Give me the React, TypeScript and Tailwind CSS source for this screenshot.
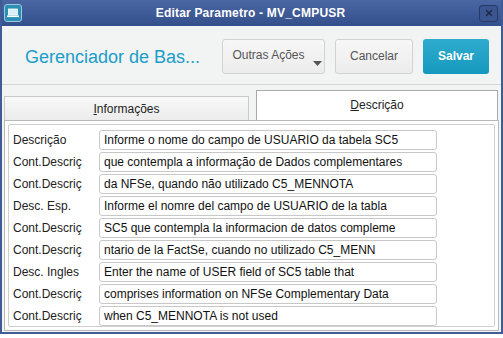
import { X } from "lucide-react";

const rows = [
  { label: "Descrição", value: "Informe o nome do campo de USUARIO da tabela SC5" },
  { label: "Cont.Descriç", value: "que contempla a informação de Dados complementares" },
  { label: "Cont.Descriç", value: "da NFSe, quando não utilizado C5_MENNOTA" },
  { label: "Desc. Esp.", value: "Informe el nomre del campo de USUARIO de la tabla" },
  { label: "Cont.Descriç", value: "SC5 que contempla la informacion de datos compleme" },
  { label: "Cont.Descriç", value: "ntario de la FactSe, cuando no utilizado C5_MENN" },
  { label: "Desc. Ingles", value: "Enter the name of USER field of SC5 table that" },
  { label: "Cont.Descriç", value: "comprises information on NFSe Complementary Data" },
  { label: "Cont.Descriç", value: "when C5_MENNOTA is not used" },
];

export default function App() {
  return (
    <div className="w-[503px] h-[338px] overflow-hidden bg-white font-['Liberation_Sans',Arial,sans-serif]">
      {/* Window */}
      <div className="h-[334px] flex flex-col bg-[#3f5c98] px-[2px] pb-[2px]">
        {/* Title bar */}
        <div className="h-[26px] flex items-center px-[2px] bg-gradient-to-b from-[#4a66a3] to-[#34508c]">
          <div className="w-[18px] h-[18px] rounded-[3px] border border-[#9fc6dc] bg-[#2a8fb5] flex items-center justify-center">
            <svg width="12" height="10" viewBox="0 0 12 10">
              <rect x="1.5" y="1" width="9" height="6" fill="#d9f0fa" stroke="#ffffff" strokeWidth="0.8" />
              <rect x="0" y="7.5" width="12" height="1.6" fill="#ffffff" />
            </svg>
          </div>
          <div className="flex-1 text-center text-white font-bold text-[12px] tracking-[0.2px]">
            Editar Parametro - MV_CMPUSR
          </div>
          <div className="w-[19px] h-[17px] rounded-[3px] border border-[#26396a] bg-[#3a5590] flex items-center justify-center mr-[1px]">
            <X size={10} strokeWidth={3.5} color="#1f2a44" />
          </div>
        </div>

        {/* Body */}
        <div className="flex-1 flex flex-col bg-[#f2f3f3]">
          {/* Header */}
          <div className="h-[59px] flex items-center border-b border-[#d6d6d6] pr-[12px]">
            <div className="flex-1 pl-[23px] text-[18px] text-[#1b9dc9] pt-[4px]">Gerenciador de Bas...</div>
            <div className="flex gap-[10px] items-center pt-[2px]">
              <div className="relative w-[103px] h-[35px] rounded-[3px] border border-[#d2d2d2] bg-gradient-to-b from-[#f7f7f7] to-[#ececec] flex items-center justify-center pb-[2px] pr-[10px] text-[12px] text-[#555]">
                Outras Ações
                <svg className="absolute right-[2px] bottom-[7px]" width="9" height="5" viewBox="0 0 9 5">
                  <path d="M0 0 H9 L4.5 5 Z" fill="#555" />
                </svg>
              </div>
              <div className="w-[78px] h-[35px] rounded-[3px] border border-[#d2d2d2] bg-gradient-to-b from-[#f7f7f7] to-[#ececec] flex items-center justify-center text-[12px] text-[#555]">
                Cancelar
              </div>
              <div className="w-[66px] h-[35px] rounded-[3px] bg-gradient-to-b from-[#2eaccf] to-[#1598bd] flex items-center justify-center text-[12px] font-bold text-white">
                Salvar
              </div>
            </div>
          </div>

          {/* Tabs */}
          <div className="flex items-end px-[2px] pt-[5px] h-[35px]">
            <div className="w-[245px] h-[24px] border border-b-0 border-[#c9c9c9] bg-gradient-to-b from-[#f8f8f8] to-[#ececec] flex items-center justify-center text-[12px] text-[#222]">
              <span><span className="underline">I</span>nformações</span>
            </div>
            <div className="w-[7px]" />
            <div className="w-[242px] h-[30px] border border-b-0 border-[#a9a9a9] bg-white flex items-center justify-center text-[12px] text-[#222] pb-[2px]">
              <span><span className="underline">D</span>escrição</span>
            </div>
          </div>

          {/* Panel */}
          <div className="flex-1 mx-[2px] mb-[1px] border border-[#b9b9b9] bg-white p-[3px]">
            <div className="h-full border border-[#cfcfcf] rounded-[2px] flex flex-col gap-[2px] pt-[5px] pl-[3px]">
              {rows.map((r, i) => (
                <div key={i} className="flex items-center h-[20px]">
                  <div className="w-[87px] text-[12px] text-[#222] pl-[1px]">{r.label}</div>
                  <div className="w-[338px] h-[20px] border border-[#c8c8c8] rounded-[3px] bg-white flex items-center px-[4px] text-[12px] text-[#111] whitespace-nowrap overflow-hidden">
                    {r.value}
                  </div>
                </div>
              ))}
            </div>
          </div>
        </div>
      </div>
      <div className="h-[4px] bg-white" />
    </div>
  );
}
